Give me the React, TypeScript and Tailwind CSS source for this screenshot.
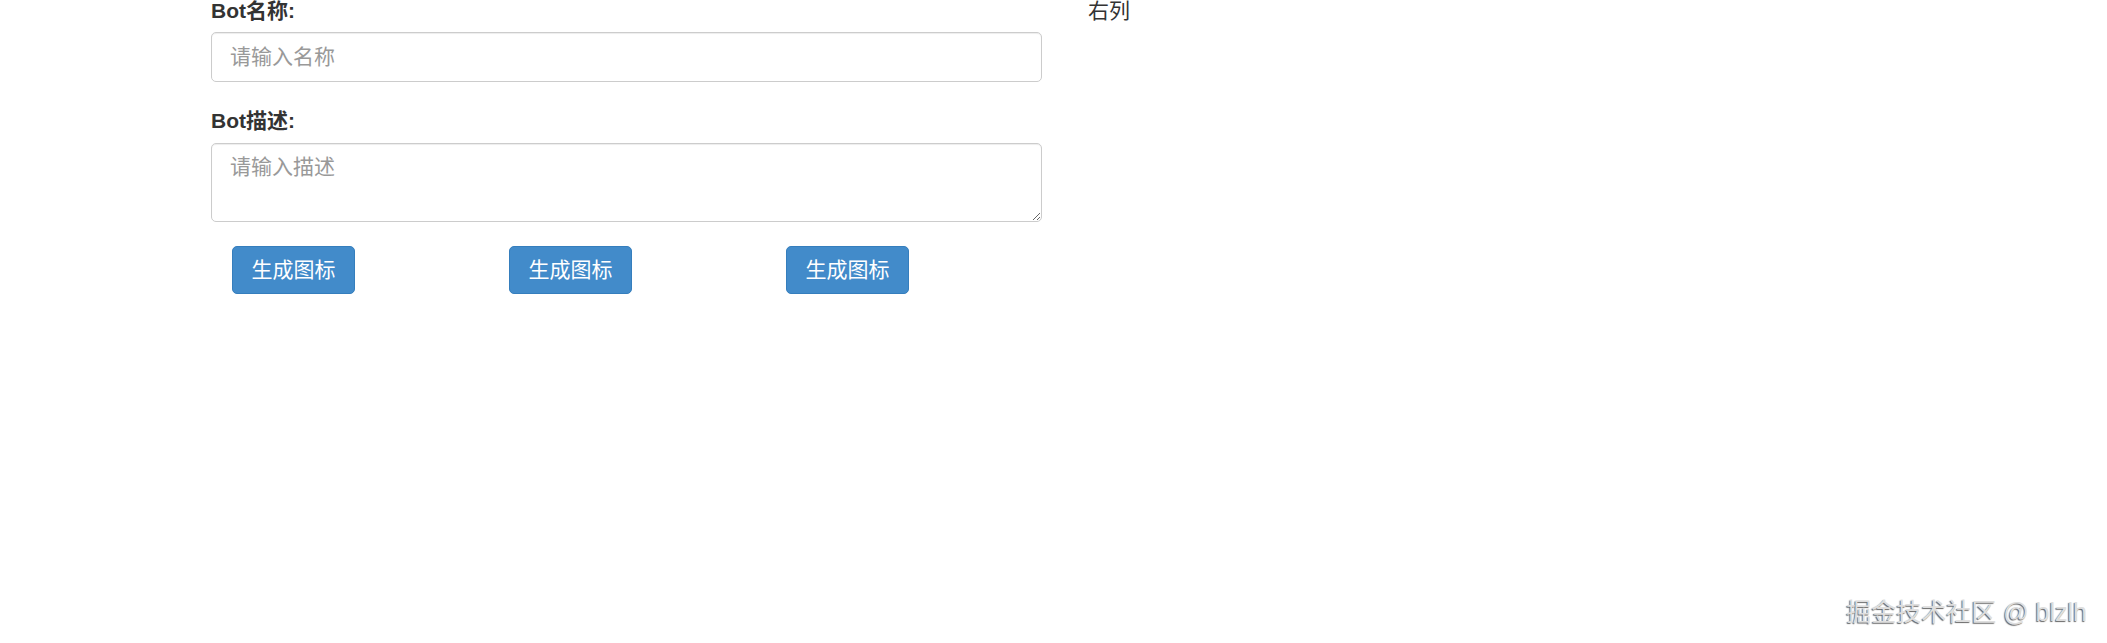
import React from 'react';

const font = { fontFamily: '"Liberation Sans", "Noto Sans CJK SC", sans-serif' };

export default function App() {
  const buttons = ['生成图标', '生成图标', '生成图标'];

  return (
    <div className="relative min-h-[643px] w-full overflow-hidden bg-white text-[#333]" style={font}>
      <div className="flex pl-[211px]">
        <div className="w-[831px]">
          <label className="block text-[21px] font-bold leading-[22px]">Bot名称:</label>
          <input
            type="text"
            placeholder="请输入名称"
            className="mt-[10px] block h-[50px] w-full rounded-[5px] border border-[#ccc] px-[18px] text-[21px] shadow-[inset_0_1px_1px_rgba(0,0,0,0.075)] outline-none placeholder:text-[#999]"
          />
          <label className="mt-[28px] block text-[21px] font-bold leading-[22px]">Bot描述:</label>
          <textarea
            placeholder="请输入描述"
            className="mt-[11px] block h-[79px] w-full rounded-[5px] border border-[#ccc] px-[18px] pt-[8px] text-[21px] leading-[30px] shadow-[inset_0_1px_1px_rgba(0,0,0,0.075)] outline-none placeholder:text-[#999]"
          />
          <div className="mt-[24px] grid grid-cols-3">
            {buttons.map((b, i) => (
              <div key={i} className="pl-[21px]">
                <button className="h-[48px] w-[123px] rounded-[5px] border border-[#357ebd] bg-[#428bca] text-[21px] text-white">
                  {b}
                </button>
              </div>
            ))}
          </div>
        </div>
        <div className="ml-[46px] text-[21px] leading-[22px]">右列</div>
      </div>

      <div className="absolute bottom-[16px] right-[20px] text-[25px] leading-[30px] text-[#dedede] [text-shadow:-1px_1px_1px_#666]">
        掘金技术社区 @ blzlh
      </div>
    </div>
  );
}
